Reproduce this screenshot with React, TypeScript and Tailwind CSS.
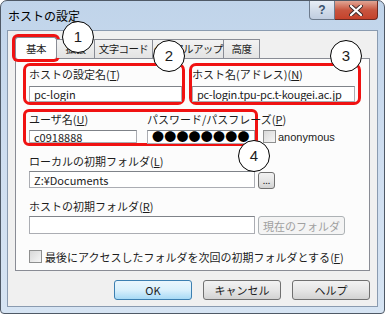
import React from "react";

const Mn = ({ c }: { c: string }) => (
  <>
    (<span className="underline">{c}</span>)
  </>
);

const Circle = ({ n, className }: { n: string; className: string }) => (
  <div
    className={
      "absolute z-20 w-[32px] h-[32px] rounded-full bg-white border border-black flex items-center justify-center text-[15px] font-['Liberation_Sans',sans-serif] " +
      className
    }
  >
    {n}
  </div>
);

const Check = () => (
  <div className="w-[13px] h-[13px] border border-[#8e8f8f] bg-gradient-to-br from-[#d8d8d8] to-[#f6f6f6] shrink-0" />
);

const Input = ({
  value,
  className,
  clip = true,
}: {
  value?: string;
  className: string;
  clip?: boolean;
}) => (
  <div
    className={
      "h-[17px] bg-white border border-[#abadb3] border-t-[#7f8389] flex items-center px-[4px] whitespace-nowrap " +
      (clip ? "overflow-hidden " : "") +
      className
    }
  >
    {value}
  </div>
);

const Btn = ({
  children,
  className,
  disabled,
}: {
  children: React.ReactNode;
  className: string;
  disabled?: boolean;
}) => (
  <div
    className={
      "flex items-center justify-center rounded-[3px] border whitespace-nowrap " +
      (disabled
        ? "border-[#adb2b5] bg-[#f4f4f4] text-[#a0a0a0] "
        : "border-[#707070] bg-gradient-to-b from-[#f2f2f2] via-[#e6e6e6] to-[#d2d2d2] ") +
      className
    }
  >
    {children}
  </div>
);

export default function App() {
  const tabs = ["基本", "拡張", "文字コード", "ダイアルアップ", "高度"];
  const widths = ["w-[42px]", "w-[38px]", "w-[58px]", "w-[71px]", "w-[36px]"];
  return (
    <div className="relative w-[386px] h-[314px] bg-white font-['Noto_Sans_CJK_JP',sans-serif] text-[11px] leading-[12px] text-[#1c1c1c]">
      <div className="w-[385px] h-[314px] rounded-t-[7px] rounded-b-[4px] border border-[#4f5966] bg-gradient-to-b from-[#c0d4ea] via-[#cfdef0] to-[#d6e4f3] flex flex-col">
        {/* title bar */}
        <div className="h-[29px] flex items-start shrink-0">
          <div className="pl-[7px] pt-[8px] text-[12px] leading-[14px] text-black">ホストの設定</div>
          <div className="ml-auto mr-[6px] flex">
            <div className="w-[26px] h-[19px] rounded-bl-[4px] border border-[#6d7b8d] border-t-0 bg-gradient-to-b from-[#e8eef6] via-[#d2dcea] to-[#c0cde0] flex items-center justify-center text-[#39506b] text-[12px] font-['Liberation_Sans',sans-serif] font-bold">
              ?
            </div>
            <div className="w-[43px] h-[19px] rounded-br-[4px] border border-[#6e2a22] border-t-0 border-l-0 bg-gradient-to-b from-[#e0a595] via-[#c8553f] to-[#c5422b] flex items-center justify-center">
              <svg width="14" height="11" viewBox="0 0 14 11">
                <path
                  d="M2 1 L12 10 M12 1 L2 10"
                  stroke="#3a2a2a"
                  strokeWidth="4"
                  strokeLinecap="round"
                />
                <path
                  d="M2 1 L12 10 M12 1 L2 10"
                  stroke="#ffffff"
                  strokeWidth="2.2"
                  strokeLinecap="round"
                />
              </svg>
            </div>
          </div>
        </div>

        {/* client */}
        <div className="mx-[6px] mb-[6px] flex-1 border border-[#8a9bb0] bg-[#f0f0f0] flex flex-col px-[7px] pt-[5px]">
          {/* tabs */}
          <div className="flex items-end h-[22px] relative z-10 text-[10.5px] tracking-[-0.6px]">
            {tabs.map((t, i) =>
              i === 0 ? (
                <div
                  key={t}
                  className={
                    "h-[22px] -mb-px bg-white border border-[#898c95] border-b-0 flex items-center justify-center whitespace-nowrap ring-[3px] ring-[#f01212] rounded-[3px] " +
                    widths[i]
                  }
                >
                  {t}
                </div>
              ) : (
                <div
                  key={t}
                  className={
                    "h-[19px] bg-gradient-to-b from-[#f3f3f3] to-[#e3e3e3] border border-[#898c95] border-l-0 border-b-0 flex items-center justify-center whitespace-nowrap " +
                    widths[i]
                  }
                >
                  {t}
                </div>
              )
            )}
          </div>

          {/* panel */}
          <div className="h-[213px] border border-[#898c95] bg-[#fcfcfc] flex flex-col pl-[7px] pt-[4px]">
            <div className="flex gap-[4px]">
              <div className="w-[162px] h-[42px] border-[3px] border-[#f01212] rounded-[7px] pl-[3px] pt-[2px] flex flex-col gap-[6px]">
                <div className="whitespace-nowrap">
                  ホストの設定名<Mn c="T" />
                </div>
                <Input value="pc-login" className="w-[153px]" />
              </div>
              <div className="w-[172px] h-[42px] border-[3px] border-[#f01212] rounded-[7px] pl-[0px] pt-[2px] flex flex-col gap-[6px]">
                <div className="whitespace-nowrap">
                  ホスト名(アドレス)<Mn c="N" />
                </div>
                <Input value="pc-login.tpu-pc.t-kougei.ac.jp" className="w-[163px] tracking-[-0.2px]" />
              </div>
            </div>

            <div className="flex items-end mt-[4px]">
              <div className="w-[235px] h-[37px] border-[3px] border-[#f01212] rounded-[6px] pl-[3px] pt-[1px] flex gap-[10px]">
                <div className="flex flex-col gap-[5px]">
                  <div className="whitespace-nowrap">
                    ユーザ名<Mn c="U" />
                  </div>
                  <Input value="c0918888" className="w-[108px]" />
                </div>
                <div className="flex flex-col gap-[5px]">
                  <div className="whitespace-nowrap">
                    パスワード/パスフレーズ<Mn c="P" />
                  </div>
                  <Input
                    clip={false}
                    value="●●●●●●●●"
                    className="w-[108px] text-[12px] tracking-[0.2px] px-[2px] text-black"
                  />
                </div>
              </div>
              <div className="flex items-center gap-[2px] ml-[5px] mb-[3px]">
                <Check />
                <span className="font-['Liberation_Sans',sans-serif]">anonymous</span>
              </div>
            </div>

            <div className="pl-[6px] mt-[9px] flex flex-col">
              <div className="whitespace-nowrap">
                ローカルの初期フォルダ<Mn c="L" />
              </div>
              <div className="flex gap-[3px] mt-[4px]">
                <Input value="Z:¥Documents" className="w-[226px]" />
                <Btn className="w-[17px] h-[17px] mt-[1px] text-[9px]">...</Btn>
              </div>
              <div className="whitespace-nowrap mt-[11px]">
                ホストの初期フォルダ<Mn c="R" />
              </div>
              <div className="flex gap-[3px] mt-[4px]">
                <Input className="w-[226px] h-[18px]" />
                <Btn disabled className="w-[87px] h-[19px]">
                  現在のフォルダ
                </Btn>
              </div>
              <div className="flex items-center gap-[3px] mt-[15px]">
                <Check />
                <span className="whitespace-nowrap">
                  最後にアクセスしたフォルダを次回の初期フォルダとする<Mn c="F" />
                </span>
              </div>
            </div>
          </div>

          {/* buttons */}
          <div className="flex justify-end gap-[11px] mt-[9px]">
            <div className="w-[78px] h-[20px] rounded-[3px] border border-[#3c7fb1] bg-gradient-to-b from-[#eaf6fd] via-[#d9f0fc] to-[#a7d9f5] flex items-center justify-center">
              OK
            </div>
            <Btn className="w-[78px] h-[20px]">キャンセル</Btn>
            <Btn className="w-[78px] h-[20px]">ヘルプ</Btn>
          </div>
        </div>
      </div>

      <Circle n="1" className="left-[62px] top-[21px]" />
      <Circle n="2" className="left-[153px] top-[40px]" />
      <Circle n="3" className="left-[330px] top-[40px]" />
      <Circle n="4" className="left-[238px] top-[140px]" />
    </div>
  );
}
